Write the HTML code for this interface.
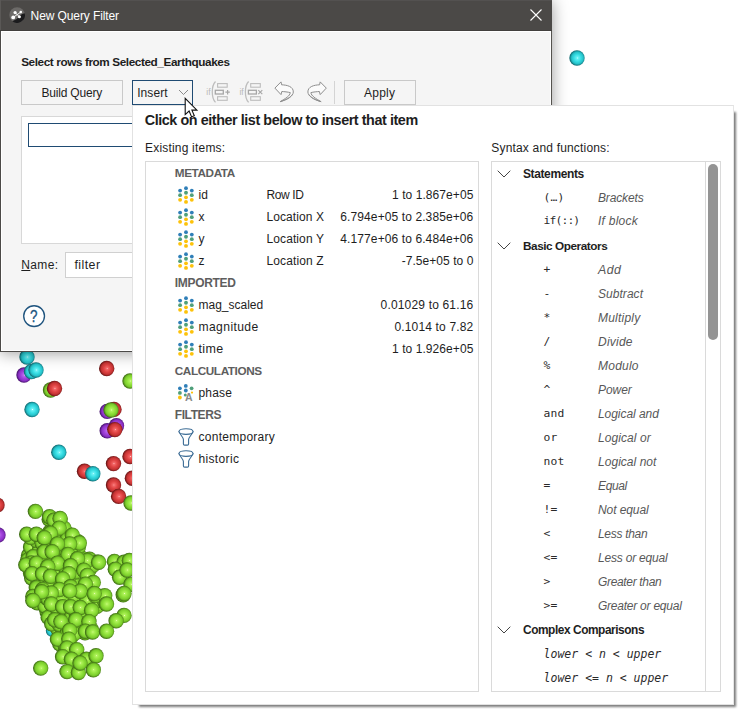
<!DOCTYPE html>
<html>
<head>
<meta charset="utf-8">
<title>New Query Filter</title>
<style>
html,body{margin:0;padding:0;}
body{width:741px;height:713px;position:relative;overflow:hidden;background:#fff;
 font-family:"Liberation Sans",sans-serif;font-size:13px;color:#1e1e1e;}
.abs{position:absolute;}
#scene{position:absolute;left:0;top:0;width:741px;height:713px;}
/* dialog */
#dlg{position:absolute;left:0;top:0;width:552px;height:352px;background:#f5f5f5;
 box-sizing:border-box;border-left:1px solid #4b4947;border-right:1px solid #55534f;border-bottom:1px solid #4b4947;
 box-shadow:0 1px 15px rgba(0,0,0,.40);}
#dlg:after{content:"";position:absolute;left:0;top:31px;right:0;bottom:0;border:1px solid #fff;}
#title{position:absolute;left:-1px;top:0;width:552px;height:31px;background:#4b4947;box-sizing:border-box;box-shadow:inset 0 -1px 0 #413f3d, inset 1px 0 0 #5a5856, inset 0 1px 0 #535150;}
#title .t{position:absolute;left:30px;top:7px;color:#fff;font-size:13px;white-space:nowrap;line-height:16px;}
.btn{position:absolute;box-sizing:border-box;border:1px solid #c9c9c9;background:#f5f5f5;text-align:center;
 white-space:nowrap;font-size:13px;line-height:22px;color:#1e1e1e;}
.t{white-space:nowrap;}
.tx{position:absolute;white-space:nowrap;line-height:16px;}
#dlgc{position:absolute;left:0;top:0;width:741px;height:713px;}
#popc{position:absolute;left:0;top:0;width:741px;height:713px;}
/* popup */
#pop{position:absolute;left:132px;top:105px;width:602px;height:600px;background:#fff;box-sizing:border-box;
 border:1px solid #e2e2e2;border-right-color:#e6e6e6;}
#popsh{position:absolute;left:139px;top:112px;width:597.3px;height:594.8px;background:#7c7c7c;filter:blur(1.1px);}
.list{position:absolute;box-sizing:border-box;border:1px solid #dadada;background:#fff;}
.hd{position:absolute;font-weight:bold;color:#5b5b5b;font-size:12px;white-space:nowrap;line-height:16px;}
.it{position:absolute;white-space:nowrap;line-height:16px;font-size:13px;color:#1e1e1e;}
.rt{position:absolute;white-space:nowrap;line-height:16px;font-size:13px;color:#1e1e1e;text-align:right;right:0;}
.mono{position:absolute;font-family:"DejaVu Sans Mono","Liberation Mono",monospace;font-size:11.5px;white-space:nowrap;line-height:16px;color:#1e1e1e;}
.desc{position:absolute;font-style:italic;color:#555;white-space:nowrap;line-height:16px;font-size:13px;}
.grp{position:absolute;font-weight:bold;white-space:nowrap;line-height:16px;font-size:13px;color:#1e1e1e;}
</style>
</head>
<body>
<svg id="scene" width="741" height="713" viewBox="0 0 741 713">
<defs>
<radialGradient id="gG" cx="0.53" cy="0.5" r="0.5"><stop offset="0" stop-color="#f4ffc8"/><stop offset="0.1" stop-color="#b2f45e"/><stop offset="0.45" stop-color="#92e23c"/><stop offset="0.75" stop-color="#7acc2c"/><stop offset="0.92" stop-color="#558f1c"/><stop offset="1" stop-color="#3c6e12"/></radialGradient>
<radialGradient id="gR" cx="0.53" cy="0.5" r="0.5"><stop offset="0" stop-color="#ffd0d0"/><stop offset="0.1" stop-color="#f46a6a"/><stop offset="0.45" stop-color="#e04444"/><stop offset="0.75" stop-color="#c63434"/><stop offset="0.92" stop-color="#8e2020"/><stop offset="1" stop-color="#6a1414"/></radialGradient>
<radialGradient id="gC" cx="0.53" cy="0.5" r="0.5"><stop offset="0" stop-color="#e8ffff"/><stop offset="0.1" stop-color="#6ef2f6"/><stop offset="0.45" stop-color="#38dee4"/><stop offset="0.75" stop-color="#26c2ca"/><stop offset="0.92" stop-color="#178c94"/><stop offset="1" stop-color="#0f6a70"/></radialGradient>
<radialGradient id="gP" cx="0.53" cy="0.5" r="0.5"><stop offset="0" stop-color="#f0d0ff"/><stop offset="0.1" stop-color="#be6cf0"/><stop offset="0.45" stop-color="#a244dc"/><stop offset="0.75" stop-color="#8c32c6"/><stop offset="0.92" stop-color="#621e92"/><stop offset="1" stop-color="#48146e"/></radialGradient>
</defs>
<g id="spheres">
<circle cx="577.0" cy="58.0" r="7.7" fill="url(#gC)"/>
<circle cx="24.0" cy="375.0" r="7.7" fill="url(#gP)"/>
<circle cx="27.0" cy="357.0" r="7.7" fill="url(#gC)"/>
<circle cx="31.5" cy="371.5" r="7.7" fill="url(#gC)"/>
<circle cx="36.0" cy="370.0" r="7.7" fill="url(#gC)"/>
<circle cx="50.5" cy="390.0" r="7.7" fill="url(#gG)"/>
<circle cx="54.5" cy="388.5" r="7.7" fill="url(#gR)"/>
<circle cx="32.0" cy="409.5" r="7.7" fill="url(#gC)"/>
<circle cx="106.7" cy="368.5" r="7.7" fill="url(#gR)"/>
<circle cx="130.0" cy="381.0" r="7.7" fill="url(#gG)"/>
<circle cx="107.2" cy="411.4" r="7.7" fill="url(#gP)"/>
<circle cx="114.0" cy="409.4" r="7.7" fill="url(#gR)"/>
<circle cx="111.0" cy="410.0" r="7.7" fill="url(#gG)"/>
<circle cx="107.2" cy="430.8" r="7.7" fill="url(#gP)"/>
<circle cx="116.5" cy="425.8" r="7.7" fill="url(#gP)"/>
<circle cx="114.8" cy="429.6" r="7.7" fill="url(#gR)"/>
<circle cx="58.8" cy="452.3" r="7.7" fill="url(#gC)"/>
<circle cx="84.5" cy="471.2" r="7.7" fill="url(#gR)"/>
<circle cx="92.8" cy="473.7" r="7.7" fill="url(#gC)"/>
<circle cx="113.5" cy="463.6" r="7.7" fill="url(#gR)"/>
<circle cx="130.0" cy="456.5" r="7.7" fill="url(#gR)"/>
<circle cx="132.4" cy="478.2" r="7.7" fill="url(#gR)"/>
<circle cx="113.5" cy="485.0" r="7.7" fill="url(#gR)"/>
<circle cx="118.6" cy="496.4" r="7.7" fill="url(#gR)"/>
<circle cx="131.0" cy="503.0" r="7.7" fill="url(#gG)"/>
<circle cx="-3.0" cy="505.0" r="7.7" fill="url(#gR)"/>
<circle cx="-2.0" cy="535.0" r="7.7" fill="url(#gP)"/>
<circle cx="51.8" cy="630.7" r="6.0" fill="url(#gC)"/>
<circle cx="60.7" cy="594.0" r="7.7" fill="url(#gG)"/>
<circle cx="65.7" cy="598.1" r="7.7" fill="url(#gG)"/>
<circle cx="36.6" cy="586.8" r="7.7" fill="url(#gG)"/>
<circle cx="76.7" cy="628.9" r="7.7" fill="url(#gG)"/>
<circle cx="28.5" cy="555.5" r="7.7" fill="url(#gG)"/>
<circle cx="78.9" cy="602.3" r="7.7" fill="url(#gG)"/>
<circle cx="37.1" cy="546.3" r="7.7" fill="url(#gG)"/>
<circle cx="59.6" cy="636.4" r="7.7" fill="url(#gG)"/>
<circle cx="66.7" cy="606.0" r="7.7" fill="url(#gG)"/>
<circle cx="61.2" cy="551.7" r="7.7" fill="url(#gG)"/>
<circle cx="48.4" cy="544.4" r="7.7" fill="url(#gG)"/>
<circle cx="89.0" cy="570.1" r="7.7" fill="url(#gG)"/>
<circle cx="27.8" cy="559.9" r="7.7" fill="url(#gG)"/>
<circle cx="30.6" cy="547.0" r="7.7" fill="url(#gG)"/>
<circle cx="70.3" cy="577.1" r="7.7" fill="url(#gG)"/>
<circle cx="30.5" cy="573.1" r="7.7" fill="url(#gG)"/>
<circle cx="39.2" cy="550.5" r="7.7" fill="url(#gG)"/>
<circle cx="39.0" cy="569.1" r="7.7" fill="url(#gG)"/>
<circle cx="96.9" cy="606.3" r="7.7" fill="url(#gG)"/>
<circle cx="89.5" cy="559.3" r="7.7" fill="url(#gG)"/>
<circle cx="41.9" cy="600.2" r="7.7" fill="url(#gG)"/>
<circle cx="53.5" cy="578.0" r="7.7" fill="url(#gG)"/>
<circle cx="42.5" cy="538.5" r="7.7" fill="url(#gG)"/>
<circle cx="99.4" cy="600.5" r="7.7" fill="url(#gG)"/>
<circle cx="57.9" cy="525.6" r="7.7" fill="url(#gG)"/>
<circle cx="73.7" cy="554.0" r="7.7" fill="url(#gG)"/>
<circle cx="70.3" cy="637.9" r="7.7" fill="url(#gG)"/>
<circle cx="60.1" cy="519.1" r="7.7" fill="url(#gG)"/>
<circle cx="35.9" cy="565.3" r="7.7" fill="url(#gG)"/>
<circle cx="82.2" cy="597.7" r="7.7" fill="url(#gG)"/>
<circle cx="63.4" cy="619.6" r="7.7" fill="url(#gG)"/>
<circle cx="86.3" cy="615.6" r="7.7" fill="url(#gG)"/>
<circle cx="51.7" cy="612.8" r="7.7" fill="url(#gG)"/>
<circle cx="57.5" cy="628.6" r="7.7" fill="url(#gG)"/>
<circle cx="97.7" cy="595.9" r="7.7" fill="url(#gG)"/>
<circle cx="76.2" cy="567.4" r="7.7" fill="url(#gG)"/>
<circle cx="72.4" cy="601.3" r="7.7" fill="url(#gG)"/>
<circle cx="63.3" cy="544.5" r="7.7" fill="url(#gG)"/>
<circle cx="82.9" cy="584.6" r="7.7" fill="url(#gG)"/>
<circle cx="47.1" cy="611.7" r="7.7" fill="url(#gG)"/>
<circle cx="38.2" cy="535.4" r="7.7" fill="url(#gG)"/>
<circle cx="59.8" cy="643.8" r="7.7" fill="url(#gG)"/>
<circle cx="37.9" cy="574.6" r="7.7" fill="url(#gG)"/>
<circle cx="76.3" cy="584.1" r="7.7" fill="url(#gG)"/>
<circle cx="76.6" cy="577.0" r="7.7" fill="url(#gG)"/>
<circle cx="76.7" cy="608.3" r="7.7" fill="url(#gG)"/>
<circle cx="62.8" cy="536.8" r="7.7" fill="url(#gG)"/>
<circle cx="44.5" cy="561.9" r="7.7" fill="url(#gG)"/>
<circle cx="75.3" cy="623.4" r="7.7" fill="url(#gG)"/>
<circle cx="31.7" cy="578.0" r="7.7" fill="url(#gG)"/>
<circle cx="53.9" cy="595.3" r="7.7" fill="url(#gG)"/>
<circle cx="85.0" cy="632.8" r="7.7" fill="url(#gG)"/>
<circle cx="77.7" cy="617.6" r="7.7" fill="url(#gG)"/>
<circle cx="68.3" cy="628.6" r="7.7" fill="url(#gG)"/>
<circle cx="97.0" cy="562.3" r="7.7" fill="url(#gG)"/>
<circle cx="77.5" cy="588.4" r="7.7" fill="url(#gG)"/>
<circle cx="48.1" cy="567.2" r="7.7" fill="url(#gG)"/>
<circle cx="71.6" cy="540.1" r="7.7" fill="url(#gG)"/>
<circle cx="68.2" cy="585.5" r="7.7" fill="url(#gG)"/>
<circle cx="68.5" cy="572.1" r="7.7" fill="url(#gG)"/>
<circle cx="44.2" cy="581.0" r="7.7" fill="url(#gG)"/>
<circle cx="62.9" cy="557.6" r="7.7" fill="url(#gG)"/>
<circle cx="37.2" cy="602.7" r="7.7" fill="url(#gG)"/>
<circle cx="81.8" cy="558.3" r="7.7" fill="url(#gG)"/>
<circle cx="52.0" cy="603.0" r="7.7" fill="url(#gG)"/>
<circle cx="53.8" cy="572.0" r="7.7" fill="url(#gG)"/>
<circle cx="67.6" cy="534.0" r="7.7" fill="url(#gG)"/>
<circle cx="56.3" cy="612.8" r="7.7" fill="url(#gG)"/>
<circle cx="65.5" cy="623.7" r="7.7" fill="url(#gG)"/>
<circle cx="65.3" cy="612.9" r="7.7" fill="url(#gG)"/>
<circle cx="36.6" cy="540.6" r="7.7" fill="url(#gG)"/>
<circle cx="49.4" cy="580.0" r="7.7" fill="url(#gG)"/>
<circle cx="87.0" cy="626.7" r="7.7" fill="url(#gG)"/>
<circle cx="82.5" cy="625.1" r="7.7" fill="url(#gG)"/>
<circle cx="43.1" cy="570.2" r="7.7" fill="url(#gG)"/>
<circle cx="52.9" cy="552.9" r="7.7" fill="url(#gG)"/>
<circle cx="79.0" cy="594.1" r="7.7" fill="url(#gG)"/>
<circle cx="58.7" cy="581.6" r="7.7" fill="url(#gG)"/>
<circle cx="85.0" cy="580.3" r="7.7" fill="url(#gG)"/>
<circle cx="59.9" cy="610.2" r="7.7" fill="url(#gG)"/>
<circle cx="90.0" cy="589.6" r="7.7" fill="url(#gG)"/>
<circle cx="90.6" cy="603.7" r="7.7" fill="url(#gG)"/>
<circle cx="39.0" cy="561.6" r="7.7" fill="url(#gG)"/>
<circle cx="58.2" cy="548.7" r="7.7" fill="url(#gG)"/>
<circle cx="92.9" cy="565.3" r="7.7" fill="url(#gG)"/>
<circle cx="49.3" cy="592.3" r="7.7" fill="url(#gG)"/>
<circle cx="58.5" cy="565.4" r="7.7" fill="url(#gG)"/>
<circle cx="52.2" cy="618.9" r="7.7" fill="url(#gG)"/>
<circle cx="53.0" cy="527.6" r="7.7" fill="url(#gG)"/>
<circle cx="52.9" cy="564.5" r="7.7" fill="url(#gG)"/>
<circle cx="37.5" cy="594.6" r="7.7" fill="url(#gG)"/>
<circle cx="69.0" cy="595.1" r="7.7" fill="url(#gG)"/>
<circle cx="78.4" cy="546.8" r="7.7" fill="url(#gG)"/>
<circle cx="55.5" cy="560.7" r="7.7" fill="url(#gG)"/>
<circle cx="64.4" cy="590.6" r="7.7" fill="url(#gG)"/>
<circle cx="57.8" cy="531.9" r="7.7" fill="url(#gG)"/>
<circle cx="53.8" cy="535.1" r="7.7" fill="url(#gG)"/>
<circle cx="49.0" cy="548.9" r="7.7" fill="url(#gG)"/>
<circle cx="44.0" cy="590.2" r="7.7" fill="url(#gG)"/>
<circle cx="63.2" cy="580.3" r="7.7" fill="url(#gG)"/>
<circle cx="48.0" cy="556.6" r="7.7" fill="url(#gG)"/>
<circle cx="53.8" cy="591.0" r="7.7" fill="url(#gG)"/>
<circle cx="50.8" cy="607.6" r="7.7" fill="url(#gG)"/>
<circle cx="29.6" cy="566.6" r="7.7" fill="url(#gG)"/>
<circle cx="94.3" cy="601.7" r="7.7" fill="url(#gG)"/>
<circle cx="51.7" cy="585.1" r="7.7" fill="url(#gG)"/>
<circle cx="71.9" cy="614.6" r="7.7" fill="url(#gG)"/>
<circle cx="70.4" cy="549.7" r="7.7" fill="url(#gG)"/>
<circle cx="38.0" cy="580.2" r="7.7" fill="url(#gG)"/>
<circle cx="71.1" cy="559.8" r="7.7" fill="url(#gG)"/>
<circle cx="62.3" cy="571.7" r="7.7" fill="url(#gG)"/>
<circle cx="76.1" cy="613.4" r="7.7" fill="url(#gG)"/>
<circle cx="56.8" cy="575.1" r="7.7" fill="url(#gG)"/>
<circle cx="67.4" cy="545.9" r="7.7" fill="url(#gG)"/>
<circle cx="42.0" cy="554.9" r="7.7" fill="url(#gG)"/>
<circle cx="49.2" cy="519.4" r="7.7" fill="url(#gG)"/>
<circle cx="44.9" cy="606.0" r="7.7" fill="url(#gG)"/>
<circle cx="59.6" cy="589.2" r="7.7" fill="url(#gG)"/>
<circle cx="65.5" cy="636.8" r="7.7" fill="url(#gG)"/>
<circle cx="90.8" cy="628.7" r="7.7" fill="url(#gG)"/>
<circle cx="71.2" cy="591.5" r="7.7" fill="url(#gG)"/>
<circle cx="33.2" cy="556.7" r="7.7" fill="url(#gG)"/>
<circle cx="52.8" cy="542.5" r="7.7" fill="url(#gG)"/>
<circle cx="88.7" cy="620.1" r="7.7" fill="url(#gG)"/>
<circle cx="54.5" cy="520.9" r="7.7" fill="url(#gG)"/>
<circle cx="82.2" cy="564.4" r="7.7" fill="url(#gG)"/>
<circle cx="48.1" cy="573.6" r="7.7" fill="url(#gG)"/>
<circle cx="85.3" cy="609.9" r="7.7" fill="url(#gG)"/>
<circle cx="83.1" cy="593.0" r="7.7" fill="url(#gG)"/>
<circle cx="48.2" cy="617.4" r="7.7" fill="url(#gG)"/>
<circle cx="49.2" cy="536.7" r="7.7" fill="url(#gG)"/>
<circle cx="89.5" cy="582.1" r="7.7" fill="url(#gG)"/>
<circle cx="42.9" cy="586.1" r="7.7" fill="url(#gG)"/>
<circle cx="83.6" cy="603.4" r="7.7" fill="url(#gG)"/>
<circle cx="81.9" cy="572.9" r="7.7" fill="url(#gG)"/>
<circle cx="63.9" cy="528.1" r="7.7" fill="url(#gG)"/>
<circle cx="47.9" cy="587.1" r="7.7" fill="url(#gG)"/>
<circle cx="77.9" cy="541.8" r="7.7" fill="url(#gG)"/>
<circle cx="74.1" cy="595.9" r="7.7" fill="url(#gG)"/>
<circle cx="30.6" cy="537.3" r="7.7" fill="url(#gG)"/>
<circle cx="104.7" cy="601.5" r="7.7" fill="url(#gG)"/>
<circle cx="65.6" cy="651.2" r="7.7" fill="url(#gG)"/>
<circle cx="80.9" cy="578.2" r="7.7" fill="url(#gG)"/>
<circle cx="86.9" cy="600.2" r="7.7" fill="url(#gG)"/>
<circle cx="66.1" cy="554.1" r="7.7" fill="url(#gG)"/>
<circle cx="56.6" cy="601.8" r="7.7" fill="url(#gG)"/>
<circle cx="65.1" cy="645.6" r="7.7" fill="url(#gG)"/>
<circle cx="62.9" cy="563.8" r="7.7" fill="url(#gG)"/>
<circle cx="72.5" cy="582.1" r="7.7" fill="url(#gG)"/>
<circle cx="67.4" cy="563.1" r="7.7" fill="url(#gG)"/>
<circle cx="42.0" cy="542.7" r="7.7" fill="url(#gG)"/>
<circle cx="62.8" cy="632.8" r="7.7" fill="url(#gG)"/>
<circle cx="61.4" cy="600.5" r="7.7" fill="url(#gG)"/>
<circle cx="44.2" cy="596.1" r="7.7" fill="url(#gG)"/>
<circle cx="81.7" cy="629.6" r="7.7" fill="url(#gG)"/>
<circle cx="68.2" cy="581.0" r="7.7" fill="url(#gG)"/>
<circle cx="67.5" cy="538.4" r="7.7" fill="url(#gG)"/>
<circle cx="56.3" cy="607.4" r="7.7" fill="url(#gG)"/>
<circle cx="76.1" cy="571.7" r="7.7" fill="url(#gG)"/>
<circle cx="51.7" cy="623.8" r="7.7" fill="url(#gG)"/>
<circle cx="82.3" cy="613.5" r="7.7" fill="url(#gG)"/>
<circle cx="47.9" cy="598.8" r="7.7" fill="url(#gG)"/>
<circle cx="59.2" cy="624.4" r="7.7" fill="url(#gG)"/>
<circle cx="70.7" cy="567.4" r="7.7" fill="url(#gG)"/>
<circle cx="49.7" cy="532.2" r="7.7" fill="url(#gG)"/>
<circle cx="65.7" cy="568.2" r="7.7" fill="url(#gG)"/>
<circle cx="74.3" cy="633.6" r="7.7" fill="url(#gG)"/>
<circle cx="82.7" cy="619.1" r="7.7" fill="url(#gG)"/>
<circle cx="31.5" cy="562.9" r="7.7" fill="url(#gG)"/>
<circle cx="67.3" cy="632.9" r="7.7" fill="url(#gG)"/>
<circle cx="35.4" cy="511.4" r="7.7" fill="url(#gG)"/>
<circle cx="49.5" cy="516.7" r="7.7" fill="url(#gG)"/>
<circle cx="53.9" cy="520.2" r="7.7" fill="url(#gG)"/>
<circle cx="60.0" cy="518.4" r="7.7" fill="url(#gG)"/>
<circle cx="59.1" cy="528.1" r="7.7" fill="url(#gG)"/>
<circle cx="26.7" cy="534.2" r="7.7" fill="url(#gG)"/>
<circle cx="36.3" cy="534.2" r="7.7" fill="url(#gG)"/>
<circle cx="50.4" cy="533.3" r="7.7" fill="url(#gG)"/>
<circle cx="44.2" cy="537.7" r="7.7" fill="url(#gG)"/>
<circle cx="72.3" cy="535.1" r="7.7" fill="url(#gG)"/>
<circle cx="79.3" cy="543.0" r="7.7" fill="url(#gG)"/>
<circle cx="69.6" cy="543.9" r="7.7" fill="url(#gG)"/>
<circle cx="57.4" cy="543.9" r="7.7" fill="url(#gG)"/>
<circle cx="44.2" cy="551.8" r="7.7" fill="url(#gG)"/>
<circle cx="52.1" cy="551.8" r="7.7" fill="url(#gG)"/>
<circle cx="67.9" cy="554.4" r="7.7" fill="url(#gG)"/>
<circle cx="87.2" cy="560.5" r="7.7" fill="url(#gG)"/>
<circle cx="77.5" cy="558.8" r="7.7" fill="url(#gG)"/>
<circle cx="98.6" cy="562.3" r="7.7" fill="url(#gG)"/>
<circle cx="25.8" cy="564.9" r="7.7" fill="url(#gG)"/>
<circle cx="36.3" cy="563.2" r="7.7" fill="url(#gG)"/>
<circle cx="57.4" cy="563.2" r="7.7" fill="url(#gG)"/>
<circle cx="47.7" cy="566.7" r="7.7" fill="url(#gG)"/>
<circle cx="70.5" cy="565.8" r="7.7" fill="url(#gG)"/>
<circle cx="83.7" cy="570.2" r="7.7" fill="url(#gG)"/>
<circle cx="31.9" cy="573.7" r="7.7" fill="url(#gG)"/>
<circle cx="42.5" cy="573.7" r="7.7" fill="url(#gG)"/>
<circle cx="68.8" cy="573.7" r="7.7" fill="url(#gG)"/>
<circle cx="87.2" cy="575.4" r="7.7" fill="url(#gG)"/>
<circle cx="50.4" cy="576.3" r="7.7" fill="url(#gG)"/>
<circle cx="62.6" cy="578.9" r="7.7" fill="url(#gG)"/>
<circle cx="93.3" cy="582.5" r="7.7" fill="url(#gG)"/>
<circle cx="85.4" cy="584.2" r="7.7" fill="url(#gG)"/>
<circle cx="70.5" cy="586.8" r="7.7" fill="url(#gG)"/>
<circle cx="36.3" cy="587.7" r="7.7" fill="url(#gG)"/>
<circle cx="42.5" cy="589.5" r="7.7" fill="url(#gG)"/>
<circle cx="59.1" cy="589.5" r="7.7" fill="url(#gG)"/>
<circle cx="80.2" cy="591.2" r="7.7" fill="url(#gG)"/>
<circle cx="51.2" cy="593.0" r="7.7" fill="url(#gG)"/>
<circle cx="32.8" cy="596.5" r="7.7" fill="url(#gG)"/>
<circle cx="95.1" cy="595.6" r="7.7" fill="url(#gG)"/>
<circle cx="104.7" cy="595.6" r="7.7" fill="url(#gG)"/>
<circle cx="41.6" cy="591.8" r="7.7" fill="url(#gG)"/>
<circle cx="69.6" cy="590.9" r="7.7" fill="url(#gG)"/>
<circle cx="94.2" cy="593.5" r="7.7" fill="url(#gG)"/>
<circle cx="32.8" cy="600.5" r="7.7" fill="url(#gG)"/>
<circle cx="51.2" cy="604.0" r="7.7" fill="url(#gG)"/>
<circle cx="62.6" cy="606.7" r="7.7" fill="url(#gG)"/>
<circle cx="70.5" cy="606.7" r="7.7" fill="url(#gG)"/>
<circle cx="80.2" cy="607.5" r="7.7" fill="url(#gG)"/>
<circle cx="106.5" cy="604.0" r="7.7" fill="url(#gG)"/>
<circle cx="91.6" cy="610.2" r="7.7" fill="url(#gG)"/>
<circle cx="54.7" cy="619.8" r="7.7" fill="url(#gG)"/>
<circle cx="60.9" cy="621.6" r="7.7" fill="url(#gG)"/>
<circle cx="75.8" cy="619.8" r="7.7" fill="url(#gG)"/>
<circle cx="88.9" cy="621.6" r="7.7" fill="url(#gG)"/>
<circle cx="69.6" cy="630.4" r="7.7" fill="url(#gG)"/>
<circle cx="85.4" cy="631.2" r="7.7" fill="url(#gG)"/>
<circle cx="92.5" cy="632.0" r="7.7" fill="url(#gG)"/>
<circle cx="57.4" cy="639.1" r="7.7" fill="url(#gG)"/>
<circle cx="68.8" cy="639.1" r="7.7" fill="url(#gG)"/>
<circle cx="67.0" cy="647.9" r="7.7" fill="url(#gG)"/>
<circle cx="76.7" cy="649.6" r="7.7" fill="url(#gG)"/>
<circle cx="62.6" cy="656.7" r="7.7" fill="url(#gG)"/>
<circle cx="71.4" cy="659.3" r="7.7" fill="url(#gG)"/>
<circle cx="86.3" cy="659.3" r="7.7" fill="url(#gG)"/>
<circle cx="96.0" cy="655.8" r="7.7" fill="url(#gG)"/>
<circle cx="67.0" cy="671.6" r="7.7" fill="url(#gG)"/>
<circle cx="78.4" cy="672.5" r="7.7" fill="url(#gG)"/>
<circle cx="93.3" cy="669.8" r="7.7" fill="url(#gG)"/>
<circle cx="40.7" cy="668.1" r="7.7" fill="url(#gG)"/>
<circle cx="80.0" cy="663.0" r="7.7" fill="url(#gG)"/>
<circle cx="114.4" cy="561.4" r="7.7" fill="url(#gG)"/>
<circle cx="124.0" cy="562.3" r="7.7" fill="url(#gG)"/>
<circle cx="129.3" cy="560.5" r="7.7" fill="url(#gG)"/>
<circle cx="115.3" cy="569.3" r="7.7" fill="url(#gG)"/>
<circle cx="119.6" cy="577.2" r="7.7" fill="url(#gG)"/>
<circle cx="131.0" cy="584.2" r="7.7" fill="url(#gG)"/>
<circle cx="123.2" cy="594.7" r="7.7" fill="url(#gG)"/>
<circle cx="124.0" cy="593.5" r="7.7" fill="url(#gG)"/>
<circle cx="127.0" cy="570.0" r="7.7" fill="url(#gG)"/>
<circle cx="124.0" cy="615.4" r="7.7" fill="url(#gG)"/>
<circle cx="116.1" cy="620.7" r="7.7" fill="url(#gG)"/>
<circle cx="106.5" cy="631.2" r="7.7" fill="url(#gG)"/>
</g>
</svg>

<div id="dlg">
 <div id="title">
  <svg class="abs" style="left:9px;top:7px" width="16" height="16" viewBox="0 0 16 16"><circle cx="8.1" cy="8.1" r="7.8" fill="#6c6a68"/><path d="M15.7 6.2 A7.8 7.8 0 0 1 3.4 14.3 Q8.5 12.5 11 8.6 Q13 6.3 15.7 6.2Z" fill="#1b1b1d"/><path d="M4.2 10.4 L11.8 5.1 M6.1 5.6 L10.4 9.8" stroke="#fff" stroke-width="0.9" fill="none"/><circle cx="4.2" cy="10.4" r="1.9" fill="#fff"/><circle cx="11.8" cy="5.1" r="1.3" fill="#fff"/><circle cx="10.4" cy="9.8" r="1.5" fill="#fff"/><circle cx="6.1" cy="5.6" r="1.6" fill="#fff"/></svg>
  <svg class="abs" style="left:530px;top:9px" width="12" height="12" viewBox="0 0 12 12"><path d="M0.5 0.5 L11.5 11.5 M11.5 0.5 L0.5 11.5" stroke="#fff" stroke-width="1.1" fill="none"/></svg>
 </div>
</div>
<div id="dlgc">
 <div class="btn" style="left:21px;top:80px;width:102px;height:25px;"></div>
 <div class="btn" style="left:132px;top:80px;width:61px;height:25px;border:1px solid #1f4b73;"></div>
 <svg class="abs" style="left:178px;top:89px" width="11" height="7" viewBox="0 0 11 7"><path d="M1 1 L5.5 5.5 L10 1" stroke="#8a8a8a" stroke-width="1" fill="none"/></svg>
 <div class="abs" style="left:334px;top:81px;width:1px;height:23px;background:#d4d4d4;"></div>
 <div class="btn" style="left:344px;top:80px;width:72px;height:25px;"></div>
 <div class="abs" style="left:21px;top:116px;width:520px;height:128px;background:#fff;border:1px solid #d8d8d8;box-sizing:border-box;"></div>
 <div class="abs" style="left:28px;top:123px;width:500px;height:24px;background:#fff;border:1px solid #1f4b73;box-sizing:border-box;"></div>
 <div class="abs" style="left:65px;top:252px;width:470px;height:26px;background:#fff;border:1px solid #d0d0d0;box-sizing:border-box;"></div>
 <svg class="abs" style="left:20px;top:302px" width="28" height="28" viewBox="0 0 28 28"><circle cx="14.1" cy="14.1" r="10.4" fill="#fff" stroke="#20557f" stroke-width="1.35"/><text transform="translate(13.75 19.9) scale(0.84 1)" x="0" y="0" text-anchor="middle" font-family="Liberation Sans, sans-serif" font-size="16" fill="#20557f" stroke="#20557f" stroke-width="0.3">?</text></svg>
 <svg class="abs" style="left:0;top:0" width="741" height="120" viewBox="0 0 741 120"><text x="206.3" y="94.7" font-family="Liberation Sans, sans-serif" font-size="8.5" fill="#b8b8b8">if</text><path d="M215.5 81.5 C211.2 86 211.2 98 215.5 102.4" fill="none" stroke="#bdbdbd" stroke-width="1.3"/><rect x="217.6" y="83.6" width="9.6" height="3.6" fill="none" stroke="#bdbdbd" stroke-width="1.1"/><rect x="217.6" y="96.7" width="9.6" height="3.6" fill="none" stroke="#bdbdbd" stroke-width="1.1"/><rect x="215.3" y="90.3" width="8" height="3.7" fill="none" stroke="#a6a6a6" stroke-width="1.3"/><path d="M225.4 92.2 h4.4 M227.6 90 v4.4" stroke="#a6a6a6" stroke-width="1.2" fill="none"/><text x="239.4" y="94.7" font-family="Liberation Sans, sans-serif" font-size="8.5" fill="#b8b8b8">if</text><path d="M248.6 81.5 C244.3 86 244.3 98 248.6 102.4" fill="none" stroke="#bdbdbd" stroke-width="1.3"/><rect x="250.7" y="83.6" width="9.6" height="3.6" fill="none" stroke="#bdbdbd" stroke-width="1.1"/><rect x="250.7" y="96.7" width="9.6" height="3.6" fill="none" stroke="#bdbdbd" stroke-width="1.1"/><rect x="248.4" y="90.3" width="8" height="3.7" fill="none" stroke="#a6a6a6" stroke-width="1.3"/><path d="M258.3 90.2 l4 4 M262.3 90.2 l-4 4" stroke="#a6a6a6" stroke-width="1.1" fill="none"/><path d="M274.9 88.1 L281 81.9 L281.6 84.8 C287 85 293.4 86.5 293.3 92 C293.2 96 288 99.5 280.1 101.7 C285.5 98.5 290 96 290.3 92.6 C288 92 284 91.6 281.8 91.5 L281 94.6 Z" fill="#fbfbfb" stroke="#8e8e8e" stroke-width="1" stroke-linejoin="round"/><path d="M292.2 94.5 C290.5 97.5 286 99.8 280.1 101.7" fill="none" stroke="#8e8e8e" stroke-width="0.9"/><g transform="translate(601.2,0) scale(-1,1)"><path d="M274.9 88.1 L281 81.9 L281.6 84.8 C287 85 293.4 86.5 293.3 92 C293.2 96 288 99.5 280.1 101.7 C285.5 98.5 290 96 290.3 92.6 C288 92 284 91.6 281.8 91.5 L281 94.6 Z" fill="#fbfbfb" stroke="#8e8e8e" stroke-width="1" stroke-linejoin="round"/><path d="M292.2 94.5 C290.5 97.5 286 99.8 280.1 101.7" fill="none" stroke="#8e8e8e" stroke-width="0.9"/></g></svg>
</div>
<div id="popsh"></div>
<div id="pop"></div>
<div id="popc">
<div class="list" style="left:145px;top:161px;width:334px;height:531px;"></div>
<div class="list" style="left:491px;top:161px;width:230px;height:531px;"></div>
<div class="abs" style="left:705px;top:162px;width:1px;height:529px;background:#dadada;"></div>
<div class="abs" style="left:708px;top:164px;width:10px;height:176px;background:#949494;border-radius:5px;"></div>
<svg class="abs" style="left:176px;top:185px" width="20" height="20" viewBox="0 0 20 20"><circle cx="4.10" cy="5.55" r="1.92" fill="#2f7fb8"/><circle cx="4.10" cy="10.15" r="1.92" fill="#4f9f7a"/><circle cx="4.10" cy="14.85" r="1.92" fill="#fdc20a"/><circle cx="15.80" cy="5.55" r="1.92" fill="#2f7fb8"/><circle cx="15.80" cy="10.15" r="1.92" fill="#4f9f7a"/><circle cx="15.80" cy="14.85" r="1.92" fill="#fdc20a"/><circle cx="10" cy="3.15" r="1.92" fill="#2f7fb8"/><circle cx="10" cy="7.75" r="1.92" fill="#4f9f7a"/><circle cx="10" cy="12.35" r="1.92" fill="#fdc20a"/><circle cx="10" cy="16.95" r="1.92" fill="#fdc20a"/></svg>
<svg class="abs" style="left:176px;top:207px" width="20" height="20" viewBox="0 0 20 20"><circle cx="4.10" cy="5.55" r="1.92" fill="#2f7fb8"/><circle cx="4.10" cy="10.15" r="1.92" fill="#4f9f7a"/><circle cx="4.10" cy="14.85" r="1.92" fill="#fdc20a"/><circle cx="15.80" cy="5.55" r="1.92" fill="#2f7fb8"/><circle cx="15.80" cy="10.15" r="1.92" fill="#4f9f7a"/><circle cx="15.80" cy="14.85" r="1.92" fill="#fdc20a"/><circle cx="10" cy="3.15" r="1.92" fill="#2f7fb8"/><circle cx="10" cy="7.75" r="1.92" fill="#4f9f7a"/><circle cx="10" cy="12.35" r="1.92" fill="#fdc20a"/><circle cx="10" cy="16.95" r="1.92" fill="#fdc20a"/></svg>
<svg class="abs" style="left:176px;top:229px" width="20" height="20" viewBox="0 0 20 20"><circle cx="4.10" cy="5.55" r="1.92" fill="#2f7fb8"/><circle cx="4.10" cy="10.15" r="1.92" fill="#4f9f7a"/><circle cx="4.10" cy="14.85" r="1.92" fill="#fdc20a"/><circle cx="15.80" cy="5.55" r="1.92" fill="#2f7fb8"/><circle cx="15.80" cy="10.15" r="1.92" fill="#4f9f7a"/><circle cx="15.80" cy="14.85" r="1.92" fill="#fdc20a"/><circle cx="10" cy="3.15" r="1.92" fill="#2f7fb8"/><circle cx="10" cy="7.75" r="1.92" fill="#4f9f7a"/><circle cx="10" cy="12.35" r="1.92" fill="#fdc20a"/><circle cx="10" cy="16.95" r="1.92" fill="#fdc20a"/></svg>
<svg class="abs" style="left:176px;top:251px" width="20" height="20" viewBox="0 0 20 20"><circle cx="4.10" cy="5.55" r="1.92" fill="#2f7fb8"/><circle cx="4.10" cy="10.15" r="1.92" fill="#4f9f7a"/><circle cx="4.10" cy="14.85" r="1.92" fill="#fdc20a"/><circle cx="15.80" cy="5.55" r="1.92" fill="#2f7fb8"/><circle cx="15.80" cy="10.15" r="1.92" fill="#4f9f7a"/><circle cx="15.80" cy="14.85" r="1.92" fill="#fdc20a"/><circle cx="10" cy="3.15" r="1.92" fill="#2f7fb8"/><circle cx="10" cy="7.75" r="1.92" fill="#4f9f7a"/><circle cx="10" cy="12.35" r="1.92" fill="#fdc20a"/><circle cx="10" cy="16.95" r="1.92" fill="#fdc20a"/></svg>
<svg class="abs" style="left:176px;top:295px" width="20" height="20" viewBox="0 0 20 20"><circle cx="4.10" cy="5.55" r="1.92" fill="#2f7fb8"/><circle cx="4.10" cy="10.15" r="1.92" fill="#4f9f7a"/><circle cx="4.10" cy="14.85" r="1.92" fill="#fdc20a"/><circle cx="15.80" cy="5.55" r="1.92" fill="#2f7fb8"/><circle cx="15.80" cy="10.15" r="1.92" fill="#4f9f7a"/><circle cx="15.80" cy="14.85" r="1.92" fill="#fdc20a"/><circle cx="10" cy="3.15" r="1.92" fill="#2f7fb8"/><circle cx="10" cy="7.75" r="1.92" fill="#4f9f7a"/><circle cx="10" cy="12.35" r="1.92" fill="#fdc20a"/><circle cx="10" cy="16.95" r="1.92" fill="#fdc20a"/></svg>
<svg class="abs" style="left:176px;top:317px" width="20" height="20" viewBox="0 0 20 20"><circle cx="4.10" cy="5.55" r="1.92" fill="#2f7fb8"/><circle cx="4.10" cy="10.15" r="1.92" fill="#4f9f7a"/><circle cx="4.10" cy="14.85" r="1.92" fill="#fdc20a"/><circle cx="15.80" cy="5.55" r="1.92" fill="#2f7fb8"/><circle cx="15.80" cy="10.15" r="1.92" fill="#4f9f7a"/><circle cx="15.80" cy="14.85" r="1.92" fill="#fdc20a"/><circle cx="10" cy="3.15" r="1.92" fill="#2f7fb8"/><circle cx="10" cy="7.75" r="1.92" fill="#4f9f7a"/><circle cx="10" cy="12.35" r="1.92" fill="#fdc20a"/><circle cx="10" cy="16.95" r="1.92" fill="#fdc20a"/></svg>
<svg class="abs" style="left:176px;top:339px" width="20" height="20" viewBox="0 0 20 20"><circle cx="4.10" cy="5.55" r="1.92" fill="#2f7fb8"/><circle cx="4.10" cy="10.15" r="1.92" fill="#4f9f7a"/><circle cx="4.10" cy="14.85" r="1.92" fill="#fdc20a"/><circle cx="15.80" cy="5.55" r="1.92" fill="#2f7fb8"/><circle cx="15.80" cy="10.15" r="1.92" fill="#4f9f7a"/><circle cx="15.80" cy="14.85" r="1.92" fill="#fdc20a"/><circle cx="10" cy="3.15" r="1.92" fill="#2f7fb8"/><circle cx="10" cy="7.75" r="1.92" fill="#4f9f7a"/><circle cx="10" cy="12.35" r="1.92" fill="#fdc20a"/><circle cx="10" cy="16.95" r="1.92" fill="#fdc20a"/></svg>
<svg class="abs" style="left:176px;top:383px" width="20" height="20" viewBox="0 0 20 20"><circle cx="3.9" cy="5.3" r="1.9" fill="#2f7fb8"/><circle cx="3.9" cy="9.9" r="1.9" fill="#4f9f7a"/><circle cx="3.9" cy="14.5" r="1.9" fill="#fdc20a"/><circle cx="9.8" cy="2.9" r="1.9" fill="#2f7fb8"/><circle cx="9.8" cy="7.5" r="1.9" fill="#2f7fb8"/><circle cx="9.3" cy="12" r="1.5" fill="#4f9f7a"/><circle cx="15.6" cy="5.3" r="1.9" fill="#4f9f7a"/><circle cx="16" cy="9.6" r="1.1" fill="#fdc20a"/><text x="12.8" y="18.3" text-anchor="middle" font-family="Liberation Sans, sans-serif" font-weight="bold" font-size="10.5" fill="#8a8a8a">A</text></svg>
<svg class="abs" style="left:177px;top:427px" width="18" height="20" viewBox="0 0 18 20"><path d="M2 4.7 C2.3 6.4 6.4 10.4 6.4 12.4 L6.4 17 Q6.4 18.1 7.6 18.1 L10.4 18.1 Q11.6 18.1 11.6 17 L11.6 12.4 C11.6 10.4 15.7 6.4 16 4.7 Z" fill="#fff" stroke="#3a6b94" stroke-width="1.1"/><ellipse cx="9" cy="4.6" rx="7" ry="2.8" fill="#fff" stroke="#3a6b94" stroke-width="1.1"/></svg>
<svg class="abs" style="left:177px;top:449px" width="18" height="20" viewBox="0 0 18 20"><path d="M2 4.7 C2.3 6.4 6.4 10.4 6.4 12.4 L6.4 17 Q6.4 18.1 7.6 18.1 L10.4 18.1 Q11.6 18.1 11.6 17 L11.6 12.4 C11.6 10.4 15.7 6.4 16 4.7 Z" fill="#fff" stroke="#3a6b94" stroke-width="1.1"/><ellipse cx="9" cy="4.6" rx="7" ry="2.8" fill="#fff" stroke="#3a6b94" stroke-width="1.1"/></svg>
<svg class="abs" style="left:497px;top:170px" width="14" height="8" viewBox="0 0 14 8"><path d="M0.7 0.7 L7 7 L13.3 0.7" stroke="#444" stroke-width="1" fill="none"/></svg>
<svg class="abs" style="left:497px;top:242px" width="14" height="8" viewBox="0 0 14 8"><path d="M0.7 0.7 L7 7 L13.3 0.7" stroke="#444" stroke-width="1" fill="none"/></svg>
<svg class="abs" style="left:497px;top:626px" width="14" height="8" viewBox="0 0 14 8"><path d="M0.7 0.7 L7 7 L13.3 0.7" stroke="#444" stroke-width="1" fill="none"/></svg>
<div class="tx" id="t0" style="left:30.60px;top:7.84px;font-family:'Liberation Sans',sans-serif;font-size:12.00px;font-weight:normal;font-style:normal;color:#fff;letter-spacing:-0.102px;">New Query Filter</div>
<div class="tx" id="t1" style="left:21.20px;top:53.93px;font-family:'Liberation Sans',sans-serif;font-size:11.76px;font-weight:bold;font-style:normal;color:#1e1e1e;letter-spacing:-0.404px;">Select rows from Selected_Earthquakes</div>
<div class="tx" id="t2" style="left:41.40px;top:84.84px;font-family:'Liberation Sans',sans-serif;font-size:12.00px;font-weight:normal;font-style:normal;color:#1e1e1e;letter-spacing:-0.180px;">Build Query</div>
<div class="tx" id="t3" style="left:137.20px;top:84.84px;font-family:'Liberation Sans',sans-serif;font-size:12.00px;font-weight:normal;font-style:normal;color:#1e1e1e;letter-spacing:0.077px;">Insert</div>
<div class="tx" id="t4" style="left:364.00px;top:84.84px;font-family:'Liberation Sans',sans-serif;font-size:12.00px;font-weight:normal;font-style:normal;color:#1e1e1e;letter-spacing:0.242px;">Apply</div>
<div class="tx" id="t5" style="left:21.30px;top:256.84px;font-family:'Liberation Sans',sans-serif;font-size:12.00px;font-weight:normal;font-style:normal;color:#1e1e1e;letter-spacing:0.335px;"><u>N</u>ame:</div>
<div class="tx" id="t6" style="left:74.50px;top:256.72px;font-family:'Liberation Sans',sans-serif;font-size:12.36px;font-weight:normal;font-style:normal;color:#1e1e1e;letter-spacing:0.430px;">filter</div>
<div class="tx" id="t7" style="left:144.70px;top:112.03px;font-family:'Liberation Sans',sans-serif;font-size:14.36px;font-weight:bold;font-style:normal;color:#1e1e1e;letter-spacing:-0.430px;">Click on either list below to insert that item</div>
<div class="tx" id="t8" style="left:145.00px;top:139.84px;font-family:'Liberation Sans',sans-serif;font-size:12.00px;font-weight:normal;font-style:normal;color:#1e1e1e;letter-spacing:0.196px;">Existing items:</div>
<div class="tx" id="t9" style="left:491.30px;top:139.84px;font-family:'Liberation Sans',sans-serif;font-size:12.00px;font-weight:normal;font-style:normal;color:#1e1e1e;letter-spacing:0.178px;">Syntax and functions:</div>
<div class="tx" id="t10" style="left:174.80px;top:164.93px;font-family:'Liberation Sans',sans-serif;font-size:11.76px;font-weight:bold;font-style:normal;color:#5e5e5e;letter-spacing:-0.409px;">METADATA</div>
<div class="tx" id="t11" style="left:198.50px;top:186.84px;font-family:'Liberation Sans',sans-serif;font-size:12.00px;font-weight:normal;font-style:normal;color:#1e1e1e;letter-spacing:0.000px;">id</div>
<div class="tx" id="t12" style="left:266.50px;top:186.84px;font-family:'Liberation Sans',sans-serif;font-size:12.00px;font-weight:normal;font-style:normal;color:#1e1e1e;letter-spacing:-0.369px;">Row ID</div>
<div class="tx" id="t13" style="right:267.60px;top:186.84px;font-family:'Liberation Sans',sans-serif;font-size:12.00px;font-weight:normal;font-style:normal;color:#1e1e1e;letter-spacing:0.068px;">1 to 1.867e+05</div>
<div class="tx" id="t14" style="left:198.50px;top:208.84px;font-family:'Liberation Sans',sans-serif;font-size:12.00px;font-weight:normal;font-style:normal;color:#1e1e1e;letter-spacing:0.000px;">x</div>
<div class="tx" id="t15" style="left:266.50px;top:208.84px;font-family:'Liberation Sans',sans-serif;font-size:12.00px;font-weight:normal;font-style:normal;color:#1e1e1e;letter-spacing:0.076px;">Location X</div>
<div class="tx" id="t16" style="right:267.60px;top:208.84px;font-family:'Liberation Sans',sans-serif;font-size:12.00px;font-weight:normal;font-style:normal;color:#1e1e1e;letter-spacing:0.105px;">6.794e+05 to 2.385e+06</div>
<div class="tx" id="t17" style="left:198.50px;top:230.84px;font-family:'Liberation Sans',sans-serif;font-size:12.00px;font-weight:normal;font-style:normal;color:#1e1e1e;letter-spacing:0.000px;">y</div>
<div class="tx" id="t18" style="left:266.50px;top:230.84px;font-family:'Liberation Sans',sans-serif;font-size:12.00px;font-weight:normal;font-style:normal;color:#1e1e1e;letter-spacing:0.100px;">Location Y</div>
<div class="tx" id="t19" style="right:267.60px;top:230.84px;font-family:'Liberation Sans',sans-serif;font-size:12.00px;font-weight:normal;font-style:normal;color:#1e1e1e;letter-spacing:0.105px;">4.177e+06 to 6.484e+06</div>
<div class="tx" id="t20" style="left:198.50px;top:252.84px;font-family:'Liberation Sans',sans-serif;font-size:12.00px;font-weight:normal;font-style:normal;color:#1e1e1e;letter-spacing:0.000px;">z</div>
<div class="tx" id="t21" style="left:266.50px;top:252.84px;font-family:'Liberation Sans',sans-serif;font-size:12.00px;font-weight:normal;font-style:normal;color:#1e1e1e;letter-spacing:0.106px;">Location Z</div>
<div class="tx" id="t22" style="right:267.60px;top:252.84px;font-family:'Liberation Sans',sans-serif;font-size:12.00px;font-weight:normal;font-style:normal;color:#1e1e1e;letter-spacing:0.053px;">-7.5e+05 to 0</div>
<div class="tx" id="t23" style="left:174.80px;top:274.84px;font-family:'Liberation Sans',sans-serif;font-size:12.00px;font-weight:bold;font-style:normal;color:#5e5e5e;letter-spacing:-0.306px;">IMPORTED</div>
<div class="tx" id="t24" style="left:198.50px;top:296.84px;font-family:'Liberation Sans',sans-serif;font-size:12.00px;font-weight:normal;font-style:normal;color:#1e1e1e;letter-spacing:-0.002px;">mag_scaled</div>
<div class="tx" id="t25" style="right:267.60px;top:296.84px;font-family:'Liberation Sans',sans-serif;font-size:12.00px;font-weight:normal;font-style:normal;color:#1e1e1e;letter-spacing:0.174px;">0.01029 to 61.16</div>
<div class="tx" id="t26" style="left:198.50px;top:318.80px;font-family:'Liberation Sans',sans-serif;font-size:12.12px;font-weight:normal;font-style:normal;color:#1e1e1e;letter-spacing:0.399px;">magnitude</div>
<div class="tx" id="t27" style="right:267.60px;top:318.84px;font-family:'Liberation Sans',sans-serif;font-size:12.00px;font-weight:normal;font-style:normal;color:#1e1e1e;letter-spacing:0.159px;">0.1014 to 7.82</div>
<div class="tx" id="t28" style="left:198.50px;top:340.68px;font-family:'Liberation Sans',sans-serif;font-size:12.48px;font-weight:normal;font-style:normal;color:#1e1e1e;letter-spacing:0.407px;">time</div>
<div class="tx" id="t29" style="right:267.60px;top:340.84px;font-family:'Liberation Sans',sans-serif;font-size:12.00px;font-weight:normal;font-style:normal;color:#1e1e1e;letter-spacing:0.068px;">1 to 1.926e+05</div>
<div class="tx" id="t30" style="left:174.80px;top:362.93px;font-family:'Liberation Sans',sans-serif;font-size:11.76px;font-weight:bold;font-style:normal;color:#5e5e5e;letter-spacing:-0.410px;">CALCULATIONS</div>
<div class="tx" id="t31" style="left:198.50px;top:384.84px;font-family:'Liberation Sans',sans-serif;font-size:12.00px;font-weight:normal;font-style:normal;color:#1e1e1e;letter-spacing:0.199px;">phase</div>
<div class="tx" id="t32" style="left:174.80px;top:406.84px;font-family:'Liberation Sans',sans-serif;font-size:12.00px;font-weight:bold;font-style:normal;color:#5e5e5e;letter-spacing:-0.418px;">FILTERS</div>
<div class="tx" id="t33" style="left:198.50px;top:428.84px;font-family:'Liberation Sans',sans-serif;font-size:12.00px;font-weight:normal;font-style:normal;color:#1e1e1e;letter-spacing:0.266px;">contemporary</div>
<div class="tx" id="t34" style="left:198.50px;top:450.84px;font-family:'Liberation Sans',sans-serif;font-size:12.00px;font-weight:normal;font-style:normal;color:#1e1e1e;letter-spacing:0.341px;">historic</div>
<div class="tx" id="t35" style="left:523.00px;top:165.84px;font-family:'Liberation Sans',sans-serif;font-size:12.00px;font-weight:bold;font-style:normal;color:#1e1e1e;letter-spacing:-0.387px;">Statements</div>
<div class="tx" id="t36" style="left:543.60px;top:190.08px;font-family:'DejaVu Sans Mono','Liberation Mono',monospace;font-size:11.30px;font-weight:normal;font-style:normal;color:#2a2a2a;letter-spacing:0.000px;letter-spacing:0.1px;">(…)</div>
<div class="tx" id="t37" style="left:598.00px;top:189.84px;font-family:'Liberation Sans',sans-serif;font-size:12.00px;font-weight:normal;font-style:italic;color:#585858;letter-spacing:-0.141px;">Brackets</div>
<div class="tx" id="t38" style="left:543.60px;top:213.08px;font-family:'DejaVu Sans Mono','Liberation Mono',monospace;font-size:11.30px;font-weight:normal;font-style:normal;color:#2a2a2a;letter-spacing:0.000px;letter-spacing:-0.85px;">if(::)</div>
<div class="tx" id="t39" style="left:598.00px;top:212.84px;font-family:'Liberation Sans',sans-serif;font-size:12.00px;font-weight:normal;font-style:italic;color:#585858;letter-spacing:0.241px;">If block</div>
<div class="tx" id="t40" style="left:523.00px;top:237.93px;font-family:'Liberation Sans',sans-serif;font-size:11.76px;font-weight:bold;font-style:normal;color:#1e1e1e;letter-spacing:-0.433px;">Basic Operators</div>
<div class="tx" id="t41" style="left:543.60px;top:262.08px;font-family:'DejaVu Sans Mono','Liberation Mono',monospace;font-size:11.30px;font-weight:normal;font-style:normal;color:#2a2a2a;letter-spacing:0.000px;letter-spacing:0.1px;">+</div>
<div class="tx" id="t42" style="left:598.00px;top:261.72px;font-family:'Liberation Sans',sans-serif;font-size:12.36px;font-weight:normal;font-style:italic;color:#585858;letter-spacing:0.400px;">Add</div>
<div class="tx" id="t43" style="left:543.60px;top:286.08px;font-family:'DejaVu Sans Mono','Liberation Mono',monospace;font-size:11.30px;font-weight:normal;font-style:normal;color:#2a2a2a;letter-spacing:0.000px;letter-spacing:0.1px;">-</div>
<div class="tx" id="t44" style="left:598.00px;top:285.84px;font-family:'Liberation Sans',sans-serif;font-size:12.00px;font-weight:normal;font-style:italic;color:#585858;letter-spacing:0.042px;">Subtract</div>
<div class="tx" id="t45" style="left:543.60px;top:310.08px;font-family:'DejaVu Sans Mono','Liberation Mono',monospace;font-size:11.30px;font-weight:normal;font-style:normal;color:#2a2a2a;letter-spacing:0.000px;letter-spacing:0.1px;">*</div>
<div class="tx" id="t46" style="left:598.00px;top:309.84px;font-family:'Liberation Sans',sans-serif;font-size:12.00px;font-weight:normal;font-style:italic;color:#585858;letter-spacing:0.216px;">Multiply</div>
<div class="tx" id="t47" style="left:543.60px;top:334.08px;font-family:'DejaVu Sans Mono','Liberation Mono',monospace;font-size:11.30px;font-weight:normal;font-style:normal;color:#2a2a2a;letter-spacing:0.000px;letter-spacing:0.1px;">/</div>
<div class="tx" id="t48" style="left:598.00px;top:333.84px;font-family:'Liberation Sans',sans-serif;font-size:12.00px;font-weight:normal;font-style:italic;color:#585858;letter-spacing:0.228px;">Divide</div>
<div class="tx" id="t49" style="left:543.60px;top:358.08px;font-family:'DejaVu Sans Mono','Liberation Mono',monospace;font-size:11.30px;font-weight:normal;font-style:normal;color:#2a2a2a;letter-spacing:0.000px;letter-spacing:0.1px;">%</div>
<div class="tx" id="t50" style="left:598.00px;top:357.84px;font-family:'Liberation Sans',sans-serif;font-size:12.00px;font-weight:normal;font-style:italic;color:#585858;letter-spacing:0.228px;">Modulo</div>
<div class="tx" id="t51" style="left:543.60px;top:382.08px;font-family:'DejaVu Sans Mono','Liberation Mono',monospace;font-size:11.30px;font-weight:normal;font-style:normal;color:#2a2a2a;letter-spacing:0.000px;letter-spacing:0.1px;">^</div>
<div class="tx" id="t52" style="left:598.00px;top:381.84px;font-family:'Liberation Sans',sans-serif;font-size:12.00px;font-weight:normal;font-style:italic;color:#585858;letter-spacing:-0.054px;">Power</div>
<div class="tx" id="t53" style="left:543.60px;top:406.08px;font-family:'DejaVu Sans Mono','Liberation Mono',monospace;font-size:11.30px;font-weight:normal;font-style:normal;color:#2a2a2a;letter-spacing:0.000px;letter-spacing:0.1px;">and</div>
<div class="tx" id="t54" style="left:598.00px;top:405.84px;font-family:'Liberation Sans',sans-serif;font-size:12.00px;font-weight:normal;font-style:italic;color:#585858;letter-spacing:-0.049px;">Logical and</div>
<div class="tx" id="t55" style="left:543.60px;top:430.08px;font-family:'DejaVu Sans Mono','Liberation Mono',monospace;font-size:11.30px;font-weight:normal;font-style:normal;color:#2a2a2a;letter-spacing:0.000px;letter-spacing:0.1px;">or</div>
<div class="tx" id="t56" style="left:598.00px;top:429.84px;font-family:'Liberation Sans',sans-serif;font-size:12.00px;font-weight:normal;font-style:italic;color:#585858;letter-spacing:0.085px;">Logical or</div>
<div class="tx" id="t57" style="left:543.60px;top:454.08px;font-family:'DejaVu Sans Mono','Liberation Mono',monospace;font-size:11.30px;font-weight:normal;font-style:normal;color:#2a2a2a;letter-spacing:0.000px;letter-spacing:0.1px;">not</div>
<div class="tx" id="t58" style="left:598.00px;top:453.84px;font-family:'Liberation Sans',sans-serif;font-size:12.00px;font-weight:normal;font-style:italic;color:#585858;letter-spacing:0.035px;">Logical not</div>
<div class="tx" id="t59" style="left:543.60px;top:478.08px;font-family:'DejaVu Sans Mono','Liberation Mono',monospace;font-size:11.30px;font-weight:normal;font-style:normal;color:#2a2a2a;letter-spacing:0.000px;letter-spacing:0.1px;">=</div>
<div class="tx" id="t60" style="left:598.00px;top:477.84px;font-family:'Liberation Sans',sans-serif;font-size:12.00px;font-weight:normal;font-style:italic;color:#585858;letter-spacing:-0.376px;">Equal</div>
<div class="tx" id="t61" style="left:543.60px;top:502.08px;font-family:'DejaVu Sans Mono','Liberation Mono',monospace;font-size:11.30px;font-weight:normal;font-style:normal;color:#2a2a2a;letter-spacing:0.000px;letter-spacing:0.1px;">!=</div>
<div class="tx" id="t62" style="left:598.00px;top:501.84px;font-family:'Liberation Sans',sans-serif;font-size:12.00px;font-weight:normal;font-style:italic;color:#585858;letter-spacing:-0.084px;">Not equal</div>
<div class="tx" id="t63" style="left:543.60px;top:526.08px;font-family:'DejaVu Sans Mono','Liberation Mono',monospace;font-size:11.30px;font-weight:normal;font-style:normal;color:#2a2a2a;letter-spacing:0.000px;letter-spacing:0.1px;">&lt;</div>
<div class="tx" id="t64" style="left:598.00px;top:525.84px;font-family:'Liberation Sans',sans-serif;font-size:12.00px;font-weight:normal;font-style:italic;color:#585858;letter-spacing:-0.306px;">Less than</div>
<div class="tx" id="t65" style="left:543.60px;top:550.08px;font-family:'DejaVu Sans Mono','Liberation Mono',monospace;font-size:11.30px;font-weight:normal;font-style:normal;color:#2a2a2a;letter-spacing:0.000px;letter-spacing:0.1px;">&lt;=</div>
<div class="tx" id="t66" style="left:598.00px;top:549.84px;font-family:'Liberation Sans',sans-serif;font-size:12.00px;font-weight:normal;font-style:italic;color:#585858;letter-spacing:-0.196px;">Less or equal</div>
<div class="tx" id="t67" style="left:543.60px;top:574.08px;font-family:'DejaVu Sans Mono','Liberation Mono',monospace;font-size:11.30px;font-weight:normal;font-style:normal;color:#2a2a2a;letter-spacing:0.000px;letter-spacing:0.1px;">&gt;</div>
<div class="tx" id="t68" style="left:598.00px;top:573.84px;font-family:'Liberation Sans',sans-serif;font-size:12.00px;font-weight:normal;font-style:italic;color:#585858;letter-spacing:-0.334px;">Greater than</div>
<div class="tx" id="t69" style="left:543.60px;top:598.08px;font-family:'DejaVu Sans Mono','Liberation Mono',monospace;font-size:11.30px;font-weight:normal;font-style:normal;color:#2a2a2a;letter-spacing:0.000px;letter-spacing:0.1px;">&gt;=</div>
<div class="tx" id="t70" style="left:598.00px;top:597.84px;font-family:'Liberation Sans',sans-serif;font-size:12.00px;font-weight:normal;font-style:italic;color:#585858;letter-spacing:-0.239px;">Greater or equal</div>
<div class="tx" id="t71" style="left:523.00px;top:621.88px;font-family:'Liberation Sans',sans-serif;font-size:11.88px;font-weight:bold;font-style:normal;color:#1e1e1e;letter-spacing:-0.433px;">Complex Comparisons</div>
<div class="tx" id="t72" style="left:543.60px;top:646.02px;font-family:'DejaVu Sans Mono','Liberation Mono',monospace;font-size:11.50px;font-weight:normal;font-style:italic;color:#2a2a2a;letter-spacing:0.000px;">lower &lt; n &lt; upper</div>
<div class="tx" id="t73" style="left:543.60px;top:670.02px;font-family:'DejaVu Sans Mono','Liberation Mono',monospace;font-size:11.50px;font-weight:normal;font-style:italic;color:#2a2a2a;letter-spacing:0.000px;">lower &lt;= n &lt; upper</div>
<svg class="abs" style="left:180px;top:94px" width="24" height="28" viewBox="-5 -4 24 28"><path d="M0.2 0.3 L0.2 16.6 L4.1 13 L6.6 18.9 L9.3 17.8 L6.9 12.1 L11.9 12.1 Z" fill="#fff" stroke="#111" stroke-width="1.1" stroke-linejoin="miter"/></svg>
</div>
</body>
</html>
